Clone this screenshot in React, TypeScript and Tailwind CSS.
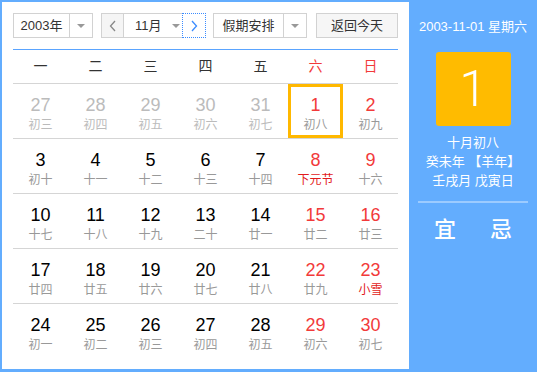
import { ReactNode } from "react";

type Day = { d: number; lunar: string; muted?: boolean; red?: boolean; lunarRed?: boolean; selected?: boolean };

const weeks: Day[][] = [
  [
    { d: 27, lunar: "初三", muted: true },
    { d: 28, lunar: "初四", muted: true },
    { d: 29, lunar: "初五", muted: true },
    { d: 30, lunar: "初六", muted: true },
    { d: 31, lunar: "初七", muted: true },
    { d: 1, lunar: "初八", red: true, selected: true },
    { d: 2, lunar: "初九", red: true },
  ],
  [
    { d: 3, lunar: "初十" },
    { d: 4, lunar: "十一" },
    { d: 5, lunar: "十二" },
    { d: 6, lunar: "十三" },
    { d: 7, lunar: "十四" },
    { d: 8, lunar: "下元节", red: true, lunarRed: true },
    { d: 9, lunar: "十六", red: true },
  ],
  [
    { d: 10, lunar: "十七" },
    { d: 11, lunar: "十八" },
    { d: 12, lunar: "十九" },
    { d: 13, lunar: "二十" },
    { d: 14, lunar: "廿一" },
    { d: 15, lunar: "廿二", red: true },
    { d: 16, lunar: "廿三", red: true },
  ],
  [
    { d: 17, lunar: "廿四" },
    { d: 18, lunar: "廿五" },
    { d: 19, lunar: "廿六" },
    { d: 20, lunar: "廿七" },
    { d: 21, lunar: "廿八" },
    { d: 22, lunar: "廿九", red: true },
    { d: 23, lunar: "小雪", red: true, lunarRed: true },
  ],
  [
    { d: 24, lunar: "初一" },
    { d: 25, lunar: "初二" },
    { d: 26, lunar: "初三" },
    { d: 27, lunar: "初四" },
    { d: 28, lunar: "初五" },
    { d: 29, lunar: "初六", red: true },
    { d: 30, lunar: "初七", red: true },
  ],
];

const weekdays = ["一", "二", "三", "四", "五", "六", "日"];

function Caret() {
  return <span className="h-0 w-0 border-x-[4px] border-t-[4px] border-x-transparent border-t-[#999]" />;
}

function Select({ children, textW }: { children: ReactNode; textW: string }) {
  return (
    <div className="flex h-[25px] border border-[#d2d2d2] bg-white">
      <div className={`flex items-center justify-center ${textW}`}>{children}</div>
      <div className="flex w-[23px] items-center justify-center border-l border-[#d2d2d2]">
        <Caret />
      </div>
    </div>
  );
}

function Chevron({ dir, color }: { dir: "l" | "r"; color: string }) {
  return (
    <svg width="8" height="12" viewBox="0 0 8 12">
      <path d={dir === "l" ? "M6 1 L1.5 6 L6 11" : "M2 1 L6.5 6 L2 11"} fill="none" stroke={color} strokeWidth="1.3" />
    </svg>
  );
}

export default function App() {
  return (
    <div
      className="flex h-[372px] w-[537px] bg-[#63adfe] pt-[2px] pb-[3px] pl-[2px] text-[#333]"
      style={{ fontFamily: '"Liberation Sans", "Noto Sans CJK SC", sans-serif' }}
    >
      <div className="w-[407px] bg-white px-[11px] pt-[11px]">
        <div className="flex h-[25px] items-center text-[13px]">
          <Select textW="w-[55px]">2003年</Select>
          <div className="ml-[8px] flex h-[25px] border border-[#d2d2d2]">
            <div className="flex w-[21px] items-center justify-center bg-[#f5f5f5]">
              <Chevron dir="l" color="#888" />
            </div>
            <div className="flex w-[59px] items-center border-l border-[#d2d2d2] pl-[11px]">
              <span>11月</span>
              <span className="ml-[10px] flex">
                <Caret />
              </span>
            </div>
            <div className="-my-px -mr-px flex w-[24px] items-center justify-center border border-dotted border-[#3b8cff] bg-white">
              <Chevron dir="r" color="#3b8cff" />
            </div>
          </div>
          <div className="ml-[7px]">
            <Select textW="w-[69px]">假期安排</Select>
          </div>
          <button className="ml-[9px] h-[25px] w-[82px] border border-[#d2d2d2] bg-[#f6f6f6] text-[13px] text-[#333]">
            返回今天
          </button>
        </div>

        <div className="mt-[11px] h-px w-[385px] bg-[#5aa4ff]" />

        <div className="grid h-[33px] w-[385px] grid-cols-7 items-center text-[14px]">
          {weekdays.map((w, i) => (
            <div key={w} className={`text-center ${i > 4 ? "text-[#f23a3a]" : "text-[#333]"}`}>
              {w}
            </div>
          ))}
        </div>

        {weeks.map((week, wi) => (
          <div key={wi} className="grid h-[55px] w-[385px] grid-cols-7 border-t border-[#d5d5d5]">
            {week.map((day, di) => (
              <div
                key={di}
                className={`flex flex-col items-center pt-[10px] ${
                  day.selected ? "shadow-[inset_0_0_0_3px_#ffb800]" : ""
                }`}
              >
                <span
                  className={`text-[18px] leading-[22px] ${
                    day.muted ? "text-[#bbb]" : day.red ? "text-[#f23a3a]" : "text-black"
                  }`}
                >
                  {day.d}
                </span>
                <span
                  className={`mt-px text-[12px] leading-[16px] ${
                    day.lunarRed ? "text-[#e21b1b]" : day.muted ? "text-[#bbb]" : "text-[#999]"
                  }`}
                >
                  {day.lunar}
                </span>
              </div>
            ))}
          </div>
        ))}
      </div>

      <div className="flex flex-1 flex-col items-center text-white">
        <div className="mt-[15px] text-[13px] leading-[20px]">2003-11-01 星期六</div>
        <div className="mt-[15px] flex h-[74px] w-[75px] items-center justify-center rounded-[3px] bg-[#ffbb00]">
          <span className="text-[50px] font-light leading-none" style={{ fontFamily: "Roboto, sans-serif" }}>
            1
          </span>
        </div>
        <div className="mt-[7px] flex flex-col items-center text-[13px] leading-[19px]">
          <span>十月初八</span>
          <span>癸未年 【羊年】</span>
          <span>壬戌月 戊寅日</span>
        </div>
        <div className="mt-[11px] h-[2px] w-[110px] bg-[#9ccbff]" />
        <div className="mt-[13px] flex gap-[34px] text-[22px] font-medium leading-[28px]">
          <span>宜</span>
          <span>忌</span>
        </div>
      </div>
    </div>
  );
}
